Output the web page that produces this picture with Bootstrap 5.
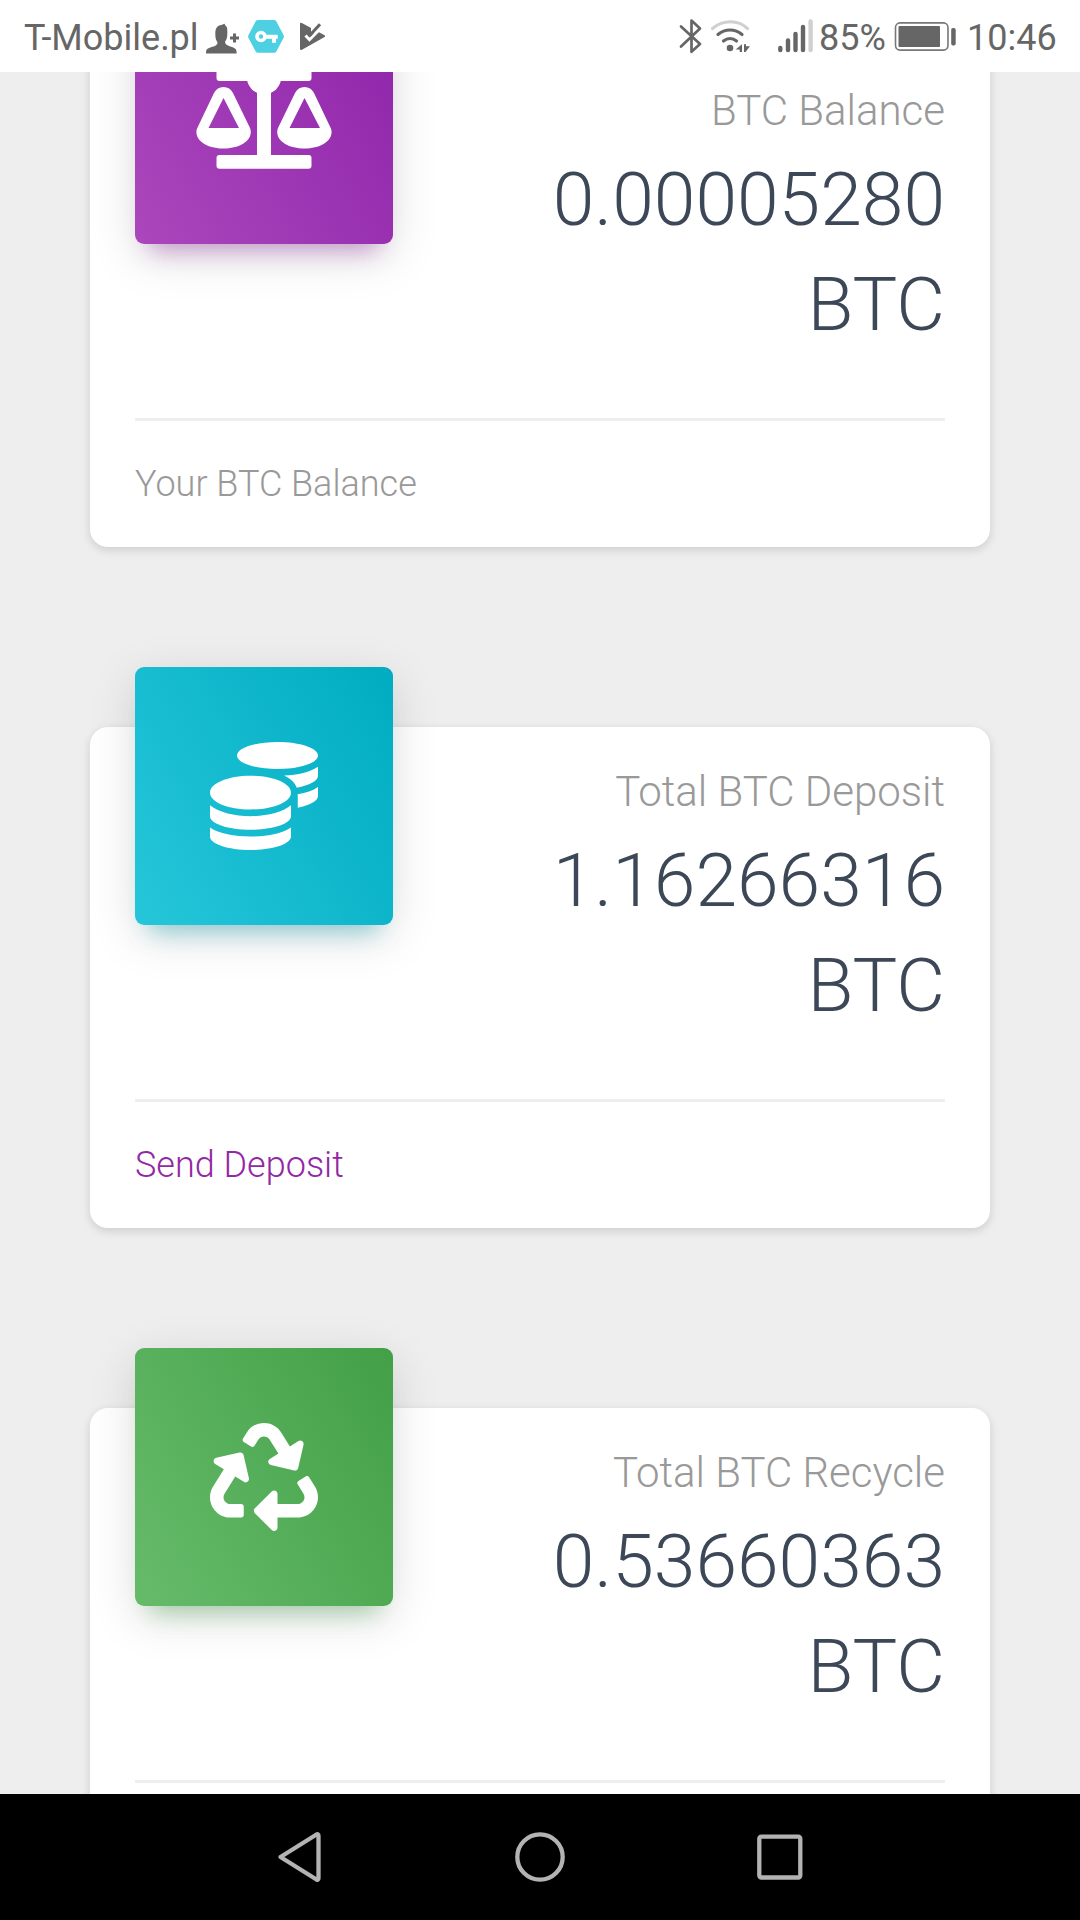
<!DOCTYPE html>
<html lang="en">
<head>
<meta charset="utf-8">
<meta name="viewport" content="width=device-width, initial-scale=1">
<title>BTC Dashboard</title>
<link href="https://cdn.jsdelivr.net/npm/bootstrap@5.3.0/dist/css/bootstrap.min.css" rel="stylesheet">
<style>
  body { font-family: Roboto, "Liberation Sans", sans-serif; font-weight: 300; background: #eee; }
  .screen { width: 1080px; height: 1920px; }
  .status-bar { height: 72px; color: #666; font-size: 36px; font-weight: 400; line-height: 72px; padding: 2px 24px 0; }
  .status-bar svg { height: 72px; margin-top: -2px; }
  .carrier { width: 180px; }
  .percent { width: 73px; }
  .clock { width: 89px; }
  .feed { height: 1722px; padding: 0 90px; }
  .feed-list { margin-top: -26px; gap: 180px; }
  .stat-card { height: 501px; border: 0; border-radius: 18px; box-shadow: 0 3px 10px rgba(0,0,0,.14); padding: 0 45px; }
  .stat-head { height: 372px; gap: 45px; }
  .tile { width: 258px; height: 258px; margin-top: -60px; border-radius: 9px; }
  .tile-purple { background: linear-gradient(60deg, #ab47bc, #8e24aa); box-shadow: 0 12px 48px rgba(0,0,0,.13), 0 21px 22px -15px rgba(156,39,176,.4); }
  .tile-cyan { background: linear-gradient(60deg, #26c6da, #00acc1); box-shadow: 0 12px 48px rgba(0,0,0,.13), 0 21px 22px -15px rgba(0,172,193,.4); }
  .tile-green { background: linear-gradient(60deg, #66bb6a, #43a047); box-shadow: 0 12px 48px rgba(0,0,0,.13), 0 21px 22px -15px rgba(76,175,80,.4); }
  .stat-label { font-size: 42px; line-height: 63px; color: #999; margin: 33px 0 5px; }
  .stat-value { font-size: 75px; line-height: 105px; color: #3c4858; font-weight: 300; margin: 0; }
  .stat-foot { border-top: 3px solid #eee; padding-top: 36px; font-size: 36px; line-height: 54px; color: #999; }
  .stat-foot a { color: #9229a4; }
  .nav-keys { height: 126px; background: #000; }
</style>
</head>
<body>
<div class="screen d-flex flex-column overflow-hidden">
  <header class="status-bar bg-white d-flex flex-shrink-0 text-nowrap">
    <span class="carrier">T-Mobile.pl</span>
    <svg width="126" viewBox="204 0 126 72" fill="#666" aria-hidden="true">
      <path d="M206 53.500c0-4 1-5 5-6.200 4-1.200 6.500-2 6.500-5-1.800-2-2.200-5-2.200-9 0-5.500 2-7.500 6-8.300l3.200-1.200.8 1.600c1.700.8 2 2.500 2 5.200v3c0 3.500-.5 6-2.200 8 0 3 2.200 4 6 5.200 4.600 1.300 5.600 2.700 5.600 6.700z"/>
      <path d="M234.500 33.500v9M230 38h9" stroke="#666" stroke-width="3"/>
      <path d="M258 20h16q1.500 0 2.300 1.300l7.200 13.700q.8 1.500 0 3l-7.200 13.400q-.8 1.400-2.300 1.400h-16q-1.500 0-2.300-1.400L248.500 38q-.8-1.500 0-3l7.200-13.700q.8-1.300 2.300-1.300z" fill="#4dd0e1"/>
      <circle cx="261" cy="36.500" r="4" fill="none" stroke="#fff" stroke-width="3.600"/>
      <path d="M265 34.700h12.700v4.100h-1.700v3.900h-4v-3.900h-7z" fill="#fff"/>
      <path d="M300 24q0-2 1.800-1l22.800 12.300q1.300 1 0 1.800L302 49.700q-2 1-2-1z"/>
      <path d="M311 25l7-4 4 1-3 10-8 2z" fill="#fff"/>
      <path d="M305.500 35.500l4 4.200L320 29" fill="none" stroke="#fff" stroke-width="3"/>
      <path d="M307 31.500l3.300 3.300L320 24.200" fill="none" stroke="#666" stroke-width="3"/>
    </svg>
    <svg class="ms-auto" width="140" viewBox="680 0 140 72" fill="none" stroke="#666" stroke-linecap="round" aria-hidden="true">
      <path d="M682 26.500l19 17.500-8.500 7.800V20.500l8.500 8-19 18" stroke-width="2.700" stroke-linejoin="round"/>
      <path d="M713.500 28.500c10.500-9 25.500-9 35 0" stroke="#d0d0d0" stroke-width="3.200"/>
      <path d="M719 34.500c7-6 17-6 24 0M724.500 41c4-3.300 9-3.300 13 0" stroke-width="3.200"/>
      <circle cx="731" cy="48" r="3.300" fill="#666" stroke="none"/>
      <path d="M743 44.300v7.700h-2.300v-2.500h-4zM745 44.300h2v2h4l-4.500 5.700H745z" fill="#666" stroke="none"/>
      <path d="M781.300 48v2M789 40.500V50M796.500 34v16M804 27v23" stroke-width="4.400"/>
      <path d="M811.600 21.500V50" stroke="#d0d0d0" stroke-width="4.400"/>
    </svg>
    <span class="percent">85%</span>
    <svg width="75" viewBox="893 0 75 72" aria-hidden="true">
      <rect x="896.500" y="22.900" width="52.500" height="27.200" rx="4.500" fill="none" stroke="#777" stroke-width="1.600"/>
      <rect x="899.500" y="26" width="41.500" height="21" rx="1" fill="#666"/>
      <rect x="952.200" y="28" width="4.500" height="17.500" rx="1.800" fill="#666"/>
    </svg>
    <span class="clock">10:46</span>
  </header>

  <main class="feed overflow-hidden flex-shrink-0">
    <div class="feed-list d-flex flex-column">
      <section class="card stat-card flex-shrink-0">
        <div class="stat-head d-flex align-items-start">
          <div class="tile tile-purple d-flex align-items-center justify-content-center flex-shrink-0">
            <svg width="136" height="108" viewBox="196 61 136 108" fill="#fff" aria-hidden="true">
              <path fill-rule="evenodd" d="M197.300 128l16.700-35q3-6 9.500-6t9.500 6l17 35q.8 2 .8 4c0 10-12.500 16.500-27.300 16.500S196.400 142 196.400 132q0-2 .9-4zm11.200 0H239L223.500 98z"/>
              <path fill-rule="evenodd" d="M278 128l17-35q3-6 9.500-6t9.500 6l16.700 35q.9 2 .9 4c0 10-12.300 16.500-27.100 16.500S277.200 142 277.200 132q0-2 .8-4zm11.500 0H320L304.500 98z"/>
              <rect x="216.500" y="155" width="95" height="13.700" rx="3"/>
              <rect x="216.500" y="67.500" width="95" height="13.500" rx="3"/>
              <circle cx="264" cy="77" r="17.300"/>
              <path d="M257 80h14v78h-14z"/>
            </svg>
          </div>
          <div class="flex-fill text-end">
            <p class="stat-label">BTC Balance</p>
            <h3 class="stat-value">0.00005280 BTC</h3>
          </div>
        </div>
        <div class="stat-foot">Your BTC Balance</div>
      </section>

      <section class="card stat-card flex-shrink-0">
        <div class="stat-head d-flex align-items-start">
          <div class="tile tile-cyan d-flex align-items-center justify-content-center flex-shrink-0">
            <svg width="108" height="108" viewBox="0 0 512 512" fill="#fff" aria-hidden="true"><path d="M0 405.300V448c0 35.300 86 64 192 64s192-28.700 192-64v-42.700C342.700 434.400 267.200 448 192 448S41.300 434.400 0 405.300zM320 128c106 0 192-28.700 192-64S426 0 320 0 128 28.700 128 64s86 64 192 64zM0 300.400V352c0 35.300 86 64 192 64s192-28.700 192-64v-51.600c-41.300 34-116.900 51.600-192 51.600S41.300 334.400 0 300.400zm416 11c57.300-11.100 96-31.700 96-55.400v-42.700c-23.200 16.400-57.300 27.600-96 34.500v63.600zM192 160C86 160 0 195.800 0 240s86 80 192 80 192-35.800 192-80-86-80-192-80zm219.300 56.300c60-10.800 100.700-32 100.700-56.300v-42.700c-35.500 25.100-96.500 38.600-160.700 41.800 29.500 14.300 51.200 33.500 60 57.200z"/></svg>
          </div>
          <div class="flex-fill text-end">
            <p class="stat-label">Total BTC Deposit</p>
            <h3 class="stat-value">1.16266316 BTC</h3>
          </div>
        </div>
        <div class="stat-foot"><a href="#" class="text-decoration-none">Send Deposit</a></div>
      </section>

      <section class="card stat-card flex-shrink-0">
        <div class="stat-head d-flex align-items-start">
          <div class="tile tile-green d-flex align-items-center justify-content-center flex-shrink-0">
            <svg width="108" height="108" viewBox="0 0 512 512" fill="#fff" aria-hidden="true"><path d="M184.561 261.903c3.232 13.997-12.123 24.635-24.068 17.168l-40.736-25.455-50.867 81.402C55.606 356.273 70.960 384 96.012 384H148c6.627 0 12 5.373 12 12v40c0 6.627-5.373 12-12 12H96.115c-75.334 0-121.302-83.048-81.408-146.880l50.822-81.388-40.725-25.448c-12.081-7.547-8.966-25.961 4.879-29.158l110.237-25.450c8.611-1.988 17.201 3.381 19.189 11.990l25.452 110.237zm98.561-182.915l41.289 66.076-40.740 25.457c-12.051 7.528-9 25.953 4.879 29.158l110.237 25.450c8.672 1.999 17.215-3.438 19.189-11.990l25.450-110.237c3.197-13.844-11.990-24.719-24.068-17.168l-40.687 25.424-41.263-66.082c-37.521-60.033-125.209-60.171-162.816 0l-17.963 28.766c-3.510 5.620-1.800 13.021 3.820 16.533l33.919 21.195c5.620 3.512 13.024 1.803 16.536-3.817l17.961-28.743c12.712-20.341 41.973-19.676 54.257-.022zM497.288 301.120l-27.515-44.065c-3.511-5.623-10.916-7.334-16.538-3.821l-33.861 21.159c-5.620 3.512-7.330 10.915-3.818 16.536l27.564 44.112c13.257 21.211-2.057 48.960-27.136 48.960H320V336.020c0-14.213-17.242-21.383-27.313-11.313l-80 79.981c-6.249 6.248-6.249 16.379 0 22.627l80 79.989C302.689 517.308 320 510.300 320 495.989V448h95.880c75.274 0 121.335-82.997 81.408-146.880z"/></svg>
          </div>
          <div class="flex-fill text-end">
            <p class="stat-label">Total BTC Recycle</p>
            <h3 class="stat-value">0.53660363 BTC</h3>
          </div>
        </div>
        <div class="stat-foot"></div>
      </section>
    </div>
  </main>

  <nav class="nav-keys d-flex justify-content-center flex-shrink-0">
    <svg width="1080" height="126" viewBox="0 1794 1080 126" fill="none" stroke="#b3b3b3" stroke-width="4.300" stroke-linejoin="round" aria-hidden="true">
      <path d="M280.500 1857L316.500 1834.500q2-1 2 1.500v42q0 2.500-2 1.500z"/>
      <circle cx="540" cy="1857" r="22.700"/>
      <rect x="759.300" y="1836.700" width="41" height="40.800" rx="2"/>
    </svg>
  </nav>
</div>
<script src="https://cdn.jsdelivr.net/npm/bootstrap@5.3.0/dist/js/bootstrap.bundle.min.js"></script>
</body>
</html>
